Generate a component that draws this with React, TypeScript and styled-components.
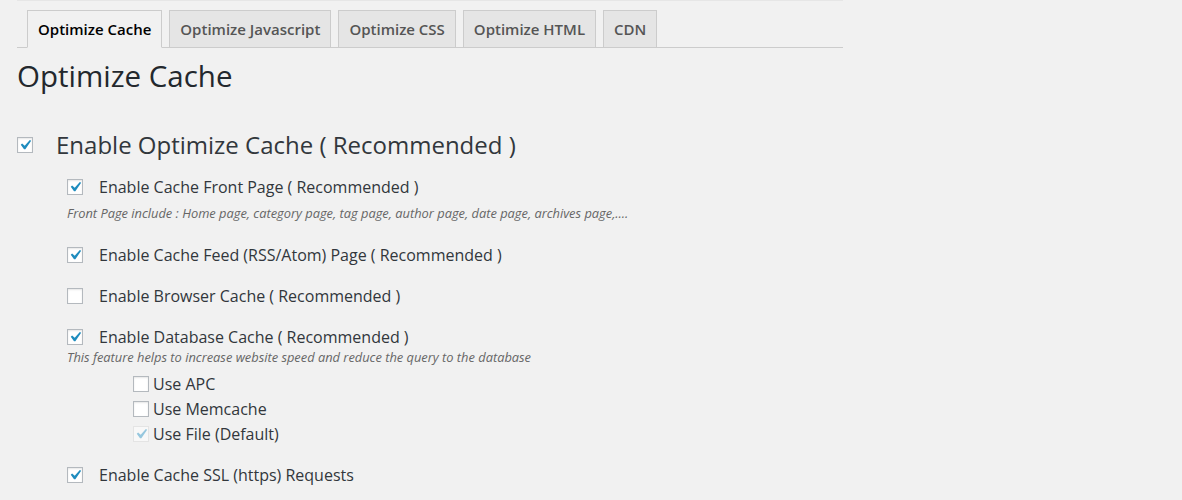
import React from "react";
import styled, { createGlobalStyle } from "styled-components";

const Global = createGlobalStyle`
  html, body { margin: 0; padding: 0; background: #f1f1f1; }
  body { font-family: "Open Sans", "Noto Sans", sans-serif; color: #444; }
  * { box-sizing: border-box; }
`;

const Page = styled.div`
  padding: 0 0 0 17px;
  width: 843px;
`;

const TopRule = styled.div`
  height: 1px;
  background: #e6e6e6;
`;

const TabBar = styled.nav`
  display: flex;
  align-items: flex-end;
  gap: 7px;
  padding: 9px 0 0 10px;
  border-bottom: 1px solid #ccc;
`;

const Tab = styled.a<{ $active?: boolean }>`
  display: block;
  height: 38px;
  margin-bottom: -1px;
  padding: 6px 10px 0;
  border: 1px solid #ccc;
  border-bottom: 1px solid ${(p) => (p.$active ? "#f1f1f1" : "#ccc")};
  background: ${(p) => (p.$active ? "#f1f1f1" : "#e5e5e5")};
  color: ${(p) => (p.$active ? "#000" : "#555")};
  font-size: 15px;
  font-weight: 600;
  line-height: 24px;
  text-decoration: none;
  white-space: nowrap;
`;

const Title = styled.h1`
  margin: 10px 0 0 0;
  font-size: 29.5px;
  font-weight: 400;
  line-height: 36px;
  color: #23282d;
`;

const MainRow = styled.label`
  display: flex;
  align-items: center;
  gap: 23px;
  margin-top: 35px;
  height: 32px;
`;

const MainLabel = styled.span`
  font-size: 24px;
  line-height: 32px;
  color: #32373c;
`;

const OptionList = styled.div`
  display: flex;
  flex-direction: column;
  gap: 17px;
  margin: 14px 0 0 50px;
`;

const Group = styled.div`
  display: flex;
  flex-direction: column;
`;

const Row = styled.label<{ $gap?: number }>`
  display: flex;
  align-items: center;
  gap: ${(p) => p.$gap ?? 16}px;
  height: 24px;
`;

const Label = styled.span`
  font-size: 16px;
  line-height: 24px;
  color: #32373c;
`;

const Desc = styled.p<{ $mt?: number; $mb?: number }>`
  margin: ${(p) => p.$mt ?? 0}px 0 ${(p) => p.$mb ?? 0}px 0;
  font-size: 12.85px;
  font-style: italic;
  line-height: 16px;
  color: #666;
`;

const SubList = styled.div`
  display: flex;
  flex-direction: column;
  gap: 1px;
  margin: 7px 0 0 66px;
`;

const Box = styled.span<{ $disabled?: boolean }>`
  display: flex;
  align-items: center;
  justify-content: center;
  flex: none;
  width: 16px;
  height: 16px;
  border: 1px solid ${(p) => (p.$disabled ? "rgba(222,222,222,.75)" : "#b4b9be")};
  background: ${(p) => (p.$disabled ? "rgba(255,255,255,.5)" : "#fff")};
  box-shadow: ${(p) => (p.$disabled ? "none" : "inset 0 1px 2px rgba(0,0,0,.1)")};
  color: ${(p) => (p.$disabled ? "rgba(30,140,190,.45)" : "#1e8cbe")};
  svg { width: 20px; height: 20px; margin: -2px; flex: none; }
`;

function Check({ checked, disabled }: { checked?: boolean; disabled?: boolean }) {
  return (
    <Box $disabled={disabled}>
      {checked && (
        <svg viewBox="0 0 20 20" fill="currentColor">
          <path d="M14.83 4.89l1.34.94-5.81 8.38H9.02L5.78 9.67l1.34-1.25 2.57 2.4z" />
        </svg>
      )}
    </Box>
  );
}

const tabs = ["Optimize Cache", "Optimize Javascript", "Optimize CSS", "Optimize HTML", "CDN"];

export default function App() {
  return (
    <>
      <Global />
      <Page>
        <TopRule />
        <TabBar>
          {tabs.map((t, i) => (
            <Tab key={t} href="#" $active={i === 0}>
              {t}
            </Tab>
          ))}
        </TabBar>
        <Title>Optimize Cache</Title>
        <MainRow>
          <Check checked />
          <MainLabel>Enable Optimize Cache ( Recommended )</MainLabel>
        </MainRow>
        <OptionList>
          <Group>
            <Row>
              <Check checked />
              <Label>Enable Cache Front Page ( Recommended )</Label>
            </Row>
            <Desc $mt={6} $mb={5}>
              Front Page include : Home page, category page, tag page, author page, date page, archives page,....
            </Desc>
          </Group>
          <Group>
            <Row>
              <Check checked />
              <Label>Enable Cache Feed (RSS/Atom) Page ( Recommended )</Label>
            </Row>
          </Group>
          <Group>
            <Row>
              <Check />
              <Label>Enable Browser Cache ( Recommended )</Label>
            </Row>
          </Group>
          <Group>
            <Row>
              <Check checked />
              <Label>Enable Database Cache ( Recommended )</Label>
            </Row>
            <Desc>This feature helps to increase website speed and reduce the query to the database</Desc>
            <SubList>
              <Row $gap={4}>
                <Check />
                <Label>Use APC</Label>
              </Row>
              <Row $gap={4}>
                <Check />
                <Label>Use Memcache</Label>
              </Row>
              <Row $gap={4}>
                <Check checked disabled />
                <Label>Use File (Default)</Label>
              </Row>
            </SubList>
          </Group>
          <Group>
            <Row>
              <Check checked />
              <Label>Enable Cache SSL (https) Requests</Label>
            </Row>
          </Group>
        </OptionList>
      </Page>
    </>
  );
}
